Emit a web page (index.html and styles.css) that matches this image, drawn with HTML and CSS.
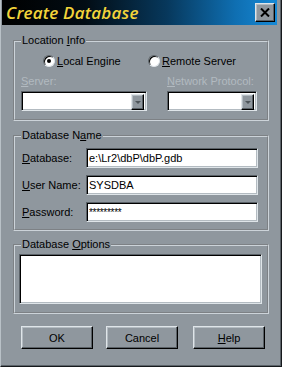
FILE: index.html
```html
<!DOCTYPE html>
<html lang="en">
<head>
    <meta charset="UTF-8">
    <title>Create Database</title>
    <link rel="stylesheet" href="styles.css">
</head>
<body>
    <div class="window">
        <div class="titlebar">
            <span class="title">Create Database</span>
            <div class="close raised">
                <svg width="10" height="9" viewBox="0 0 10 9"><path d="M1 0.5 L9 8.5 M9 0.5 L1 8.5" stroke="#000" stroke-width="2"/></svg>
            </div>
        </div>

        <div class="content">
            <fieldset class="group">
                <legend>Location <u>I</u>nfo</legend>
                <div class="loc">
                    <div class="radios">
                        <div class="radio-item"><span class="radio checked"></span><span><u>L</u>ocal Engine</span></div>
                        <div class="radio-item"><span class="radio"></span><span><u>R</u>emote Server</span></div>
                    </div>
                    <div class="fields">
                        <div class="col">
                            <span class="disabled"><u>S</u>erver:</span>
                            <div class="combo sunken"><span class="drop raised"><span class="arrow"></span></span></div>
                        </div>
                        <div class="col">
                            <span class="disabled"><u>N</u>etwork Protocol:</span>
                            <div class="combo sunken"><span class="drop raised"><span class="arrow"></span></span></div>
                        </div>
                    </div>
                </div>
            </fieldset>

            <fieldset class="group second">
                <legend>Database N<u>a</u>me</legend>
                <div class="names">
                    <label><u>D</u>atabase:</label>
                    <input class="sunken" type="text" value="e:\Lr2\dbP\dbP.gdb" readonly>
                    <label><u>U</u>ser Name:</label>
                    <input class="sunken" type="text" value="SYSDBA" readonly>
                    <label><u>P</u>assword:</label>
                    <input class="sunken pass" type="text" value="*********" readonly>
                </div>
            </fieldset>

            <fieldset class="group third">
                <legend>Database <u>O</u>ptions</legend>
                <div class="opts">
                    <div class="options-box sunken"></div>
                </div>
            </fieldset>

            <div class="buttons">
                <div class="btn raised">OK</div>
                <div class="btn raised">Cancel</div>
                <div class="btn raised help"><span><u>H</u>elp</span></div>
            </div>
        </div>
    </div>
</body>
</html>
```

FILE: styles.css
```css
* { box-sizing: border-box; }
body { margin: 0; background: #8f979e; font-family: "Liberation Sans", Arial, sans-serif; font-size: 11px; color: #000; }
u { text-decoration: underline; text-underline-offset: 1px; }

.window {
    width: 282px;
    height: 367px;
    background: #8f979e;
    border-left: 1px solid #b9c1c7;
    border-right: 1px solid #16191c;
    border-bottom: 1px solid #16191c;
    box-shadow: inset -1px -1px 0 #5c6369;
    padding: 0 4px 4px 1px;
}

.titlebar {
    height: 25px;
    display: flex;
    align-items: center;
    justify-content: space-between;
    padding: 0 2px 1px 4px;
    background: linear-gradient(90deg, #000 0%, #020c14 30%, #07385c 60%, #0f6fb2 85%, #1689d6 100%);
}
.title {
    font-family: "Open Sans", sans-serif;
    font-style: italic;
    font-weight: 600;
    font-size: 17px;
    color: #f2d43a;
    letter-spacing: 0.2px;
}
.close {
    width: 20px;
    height: 19px;
    background: #8f979e;
    display: flex;
    align-items: center;
    justify-content: center;
}

.raised {
    border: 1px solid;
    border-color: #dfe5e9 #000 #000 #dfe5e9;
    box-shadow: inset -1px -1px 0 #5a6167, inset 1px 1px 0 #b3bbc1;
}
.sunken {
    border: 1px solid;
    border-color: #5a6167 #dfe5e9 #dfe5e9 #5a6167;
    box-shadow: inset 1px 1px 0 #000, inset -1px -1px 0 #b3bbc1;
    background: #fff;
}

.content { padding: 9px 8px 0 11px; }

.group {
    margin: 0;
    padding: 0;
    min-width: 0;
    border: 2px groove #ccd3d9;
}
.group legend {
    margin-left: 6px;
    padding: 0 1px;
    line-height: 13px;
}

.loc { padding: 7px 10px 8px 6px; }
.radios { display: flex; padding-left: 22px; height: 13px; }
.radio-item { display: flex; align-items: center; gap: 2px; }
.radio-item:first-child { width: 105px; }
.radio {
    width: 12px;
    height: 12px;
    border-radius: 50%;
    background: #fff;
    border: 1px solid;
    border-color: #5a6167 #dfe5e9 #dfe5e9 #5a6167;
    box-shadow: inset 1px 1px 0 #000;
    display: flex;
    align-items: center;
    justify-content: center;
}
.radio.checked::after {
    content: "";
    width: 4px;
    height: 4px;
    border-radius: 50%;
    background: #000;
}

.fields { display: flex; gap: 20px; margin-top: 8px; }
.col { display: flex; flex-direction: column; gap: 3px; }
.col:first-child { width: 126px; }
.col:last-child { width: 90px; }
.col span { line-height: 13px; }
.disabled { color: #b2bac0; }
.combo {
    height: 20px;
    display: flex;
    justify-content: flex-end;
    padding: 2px;
}
.drop {
    width: 13px;
    height: 16px;
    background: #8f979e;
    display: flex;
    align-items: center;
    justify-content: center;
}
.arrow {
    width: 0;
    height: 0;
    border-left: 3px solid transparent;
    border-right: 3px solid transparent;
    border-top: 3px solid #4d5459;
}

.second { margin-top: 8px; }
.names {
    display: grid;
    grid-template-columns: 64px 172px;
    row-gap: 7px;
    align-items: center;
    padding: 6px 10px 7px 7px;
}
.names input {
    height: 20px;
    width: 172px;
    margin: 0;
    padding: 0 0 0 2px;
    font-family: "Liberation Sans", Arial, sans-serif;
    font-size: 11px;
    color: #000;
    outline: none;
}
.names .pass { font-size: 10px; letter-spacing: -0.3px; }

.third { margin-top: 7px; }
.opts { padding: 3px 5px 8px 4px; }
.options-box { height: 50px; }

.buttons { display: flex; gap: 13px; padding-left: 8px; margin-top: 12px; }
.btn {
    width: 72px;
    height: 23px;
    display: flex;
    align-items: center;
    justify-content: center;
    background: #8f979e;
}
.help { margin-left: 2px; }
```
